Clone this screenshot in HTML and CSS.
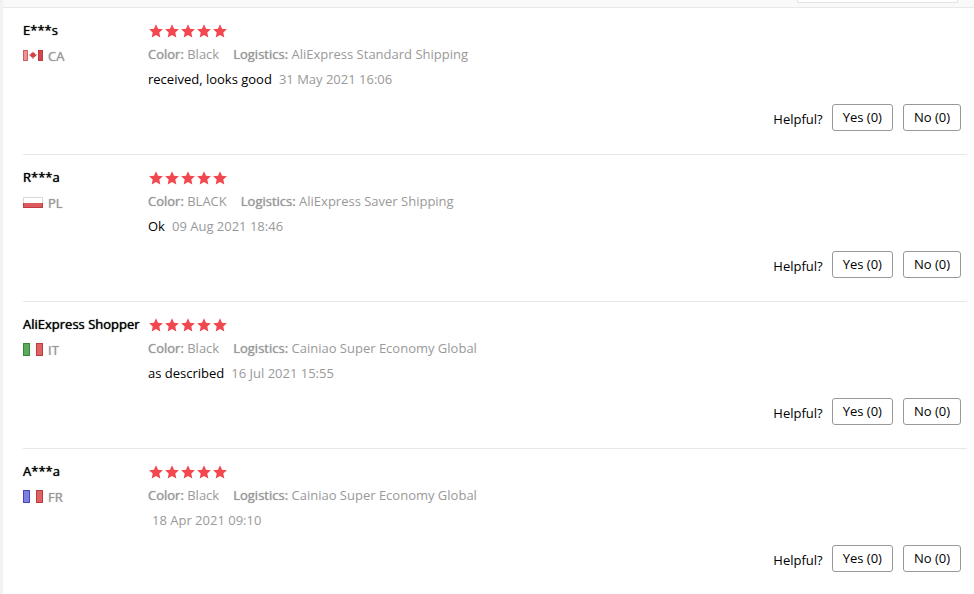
FILE: index.html
```html
<!DOCTYPE html>
<html lang="en">
<head>
    <meta charset="UTF-8">
    <meta name="viewport" content="width=device-width, initial-scale=1.0">
    <title>Feedback</title>
    <link rel="stylesheet" href="styles.css">
</head>
<body>
    <svg class="defs" aria-hidden="true">
        <symbol id="stars" viewBox="0 0 80 16">
            <path id="star" d="M8 1.200l2 4.500 4.900.5-3.600 3.300 1 4.900L8 11.900l-4.300 2.500 1-4.900L1.100 6.200l4.900-.5z"/>
            <use href="#star" x="16"/>
            <use href="#star" x="32"/>
            <use href="#star" x="48"/>
            <use href="#star" x="64"/>
        </symbol>
    </svg>
    <div class="feedback">
        <div class="filter">
            <div class="filter_box"></div>
        </div>
        <ul class="list">
            <li class="item">
                <div class="user">
                    <p class="name">E***s</p>
                    <p class="country">
                        <svg class="flag" viewBox="0 0 20 13">
                            <rect width="20" height="13" fill="#fff"/>
                            <rect y="1" width="5" height="11" fill="#ea9496"/>
                            <rect x="15" y="1" width="5" height="11" fill="#d0474b"/>
                            <path d="M.5 1.500h4v10h-4zM15.500 1.500h4v10h-4z" fill="none" stroke="#b8383c" stroke-opacity=".6"/>
                            <path d="M10 2.500l1 1.700 1.200-.4-.2 1.600 1.800-.2-.6 1.600-2.200 1.600h-.6V10h-.8V8.400H9L6.800 6.800l-.6-1.600 1.800.2-.2-1.600 1.200.4z" fill="#cf4448"/>
                        </svg>
                        <b>CA</b>
                    </p>
                </div>
                <div class="main">
                    <svg class="stars" role="img" aria-label="5 stars"><use href="#stars"/></svg>
                    <p class="info"><span><b>Color:</b> Black</span><span><b>Logistics:</b> AliExpress Standard Shipping</span></p>
                    <p class="content"><span>received, looks good</span><time>31 May 2021 16:06</time></p>
                    <div class="helpful">
                        <span>Helpful?</span>
                        <div class="btns">
                            <button type="button">Yes (0)</button>
                            <button type="button">No (0)</button>
                        </div>
                    </div>
                </div>
            </li>
            <li class="item">
                <div class="user">
                    <p class="name">R***a</p>
                    <p class="country">
                        <svg class="flag" viewBox="0 0 20 13">
                            <rect y="1" width="20" height="12" fill="#fff"/>
                            <path d="M.5 7V1.500h19V7" fill="none" stroke="#d8d8d8"/>
                            <rect y="7" width="20" height="5" fill="#dc5a5c"/>
                            <path d="M.5 7v4.500h19V7" fill="none" stroke="#bd3c40"/>
                        </svg>
                        <b>PL</b>
                    </p>
                </div>
                <div class="main">
                    <svg class="stars" role="img" aria-label="5 stars"><use href="#stars"/></svg>
                    <p class="info"><span><b>Color:</b> BLACK</span><span><b>Logistics:</b> AliExpress Saver Shipping</span></p>
                    <p class="content"><span>Ok</span><time>09 Aug 2021 18:46</time></p>
                    <div class="helpful">
                        <span>Helpful?</span>
                        <div class="btns">
                            <button type="button">Yes (0)</button>
                            <button type="button">No (0)</button>
                        </div>
                    </div>
                </div>
            </li>
            <li class="item">
                <div class="user">
                    <p class="name">AliExpress Shopper</p>
                    <p class="country">
                        <svg class="flag" viewBox="0 0 20 13">
                            <rect width="20" height="13" fill="#fafafa"/>
                            <rect width="7" height="13" fill="#5cab5c"/>
                            <rect x="13" width="7" height="13" fill="#de6264"/>
                            <path d="M.5.5h6v12h-6z" fill="none" stroke="#37853a"/>
                            <path d="M13.500.5h6v12h-6z" fill="none" stroke="#b9393d"/>
                        </svg>
                        <b>IT</b>
                    </p>
                </div>
                <div class="main">
                    <svg class="stars" role="img" aria-label="5 stars"><use href="#stars"/></svg>
                    <p class="info"><span><b>Color:</b> Black</span><span><b>Logistics:</b> Cainiao Super Economy Global</span></p>
                    <p class="content"><span>as described</span><time>16 Jul 2021 15:55</time></p>
                    <div class="helpful">
                        <span>Helpful?</span>
                        <div class="btns">
                            <button type="button">Yes (0)</button>
                            <button type="button">No (0)</button>
                        </div>
                    </div>
                </div>
            </li>
            <li class="item">
                <div class="user">
                    <p class="name">A***a</p>
                    <p class="country">
                        <svg class="flag" viewBox="0 0 20 13">
                            <rect width="20" height="13" fill="#fff"/>
                            <rect width="7" height="13" fill="#7f7fe2"/>
                            <rect x="13" width="7" height="13" fill="#de6264"/>
                            <path d="M.5.5h6v12h-6z" fill="none" stroke="#4545b8"/>
                            <path d="M13.500.5h6v12h-6z" fill="none" stroke="#b9393d"/>
                        </svg>
                        <b>FR</b>
                    </p>
                </div>
                <div class="main">
                    <svg class="stars" role="img" aria-label="5 stars"><use href="#stars"/></svg>
                    <p class="info"><span><b>Color:</b> Black</span><span><b>Logistics:</b> Cainiao Super Economy Global</span></p>
                    <p class="content"><time class="alone">18 Apr 2021 09:10</time></p>
                    <div class="helpful">
                        <span>Helpful?</span>
                        <div class="btns">
                            <button type="button">Yes (0)</button>
                            <button type="button">No (0)</button>
                        </div>
                    </div>
                </div>
            </li>
        </ul>
    </div>
</body>
</html>
```
FILE: styles.css
```css
*{
    margin: 0px;
    padding: 0px;
    list-style: none;
    box-sizing: border-box;
}
body{
    font: 13px "Open Sans", "Liberation Sans", sans-serif;
    color: #000;
    background: #fff;
}
.defs{
    display: none;
}
.feedback{
    min-height: 100vh;
    border-left: 3px solid #f2f2f2;
}
.filter{
    height: 8px;
    padding-right: 16px;
    background: #f9f9f9;
    border-bottom: 1px solid #e8e8e8;
}
.filter_box{
    width: 161px;
    height: 3px;
    margin-left: auto;
    background: #fff;
    border: 1px solid #e4e4e4;
    border-top: none;
}
.list{
    padding: 0 7px 0 20px;
}
.item{
    display: flex;
    padding: 12px 0 23px;
    border-bottom: 1px solid #e8e8e8;
}
.item:last-child{
    border-bottom: none;
    padding-bottom: 20px;
}
.user{
    width: 125px;
    flex: none;
}
.name{
    margin-bottom: 2px;
    line-height: 20px;
    white-space: nowrap;
    text-shadow: 0 0 1px #000;
}
.country{
    display: flex;
    align-items: center;
    gap: 5px;
    height: 28px;
    color: #999;
}
.flag{
    width: 20px;
    height: 13px;
    margin-bottom: 2px;
}
b{
    font-weight: 400;
    text-shadow: 0 0 1px #999;
}
.main{
    flex: 1;
}
.stars{
    display: block;
    width: 80px;
    height: 22px;
    fill: #f0484e;
}
.info{
    display: flex;
    gap: 14px;
    line-height: 24px;
    color: #999;
}
.content{
    display: flex;
    gap: 7px;
    line-height: 26px;
}
.content time{
    color: #999;
}
.content .alone{
    padding-left: 4px;
}
.helpful{
    display: flex;
    justify-content: flex-end;
    align-items: flex-end;
    gap: 9px;
    margin-top: 12px;
    padding-right: 6px;
    line-height: 24px;
}
.btns{
    display: flex;
    gap: 10px;
}
.btns button{
    height: 27px;
    padding: 0 10px 2px;
    font: inherit;
    color: #000;
    background: #fff;
    border: 1px solid #999;
    border-radius: 3px;
    cursor: pointer;
}
```
